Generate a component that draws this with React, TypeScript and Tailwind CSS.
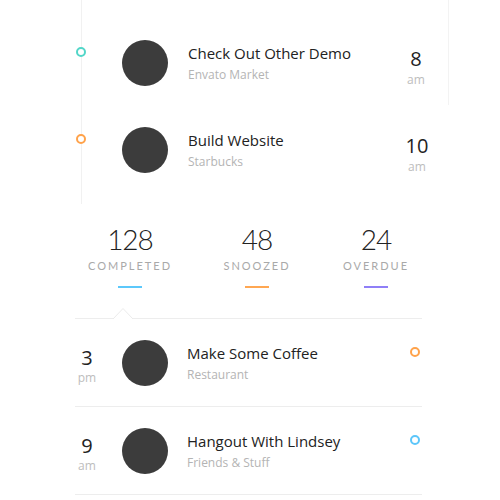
type Task = {
  title: string;
  place: string;
  hour: string;
  period: string;
  dot: string;
};

const upcoming: Task[] = [
  { title: 'Check Out Other Demo', place: 'Envato Market', hour: '8', period: 'am', dot: 'border-[#52d6c8]' },
  { title: 'Build Website', place: 'Starbucks', hour: '10', period: 'am', dot: 'border-[#ffa24a]' },
];

const later: Task[] = [
  { title: 'Make Some Coffee', place: 'Restaurant', hour: '3', period: 'pm', dot: 'border-[#ffa24a]' },
  { title: 'Hangout With Lindsey', place: 'Friends & Stuff', hour: '9', period: 'am', dot: 'border-[#5cc6fa]' },
];

function Avatar() {
  return <div className="w-[46px] h-[46px] rounded-full bg-[#3c3c3c] flex-shrink-0" />;
}

function Dot({ color }: { color: string }) {
  return <div className={`w-[10px] h-[10px] rounded-full border-2 bg-white flex-shrink-0 ${color}`} />;
}

function Info({ task }: { task: Task }) {
  return (
    <div className="min-w-0">
      <p className="text-[15px] leading-[20px] text-[#222] truncate">{task.title}</p>
      <p className="text-[12px] leading-[16px] mt-[4px] text-[#b4b4b4] truncate">{task.place}</p>
    </div>
  );
}

export default function App() {
  return (
    <div className="w-[500px] h-[500px] bg-white overflow-hidden" style={{ fontFamily: '"Open Sans", sans-serif' }}>
      {/* Timeline */}
      <div className="ml-[81px] border-l border-[#f1f1f1] h-[204px]">
        {upcoming.map((task, i) => (
          <div
            key={task.title}
            className={`-ml-[6px] w-[373px] flex items-center ${i === 0 ? 'h-[105px] pt-[20px] border-r border-[#f3f3f3]' : 'h-[89px]'}`}
          >
            <div className="mb-[21px]">
              <Dot color={task.dot} />
            </div>
            <div className="ml-[36px]">
              <Avatar />
            </div>
            <div className="ml-[20px] flex-1">
              <Info task={task} />
            </div>
            <div className="w-[40px] mr-[12px] mt-[9px] text-center">
              <p className="text-[20px] leading-[24px] text-[#222]">{task.hour}</p>
              <p className="mt-[2px] text-[12px] leading-[14px] text-[#bdbdbd]">{task.period}</p>
            </div>
          </div>
        ))}
      </div>

      {/* Stats */}
      <div className="h-[114px] pt-[19px] flex" style={{ fontFamily: 'Lato, sans-serif' }}>
        {[
          { n: '128', label: 'Completed', bar: 'bg-[#5cc8fb]', ml: 'ml-[75px]' },
          { n: '48', label: 'Snoozed', bar: 'bg-[#ffa752]', ml: 'ml-[17px]' },
          { n: '24', label: 'Overdue', bar: 'bg-[#8f7ff7]', ml: 'ml-[9px]' },
        ].map((s) => (
          <div key={s.label} className={`w-[110px] flex flex-col items-center ${s.ml}`}>
            <p className="text-[28px] leading-[32px] font-light tracking-[-1px] text-[#222]">{s.n}</p>
            <p className="mt-[3px] text-[11px] leading-[16px] uppercase tracking-[2px] text-[#a9a9a9]">{s.label}</p>
            <div className={`mt-[12px] w-[24px] h-[2px] ${s.bar}`} />
          </div>
        ))}
      </div>

      {/* List */}
      <div className="relative ml-[75px] w-[347px] border-t border-[#ededed]">
        <svg className="absolute left-[38px] -top-[12px]" width="20" height="13" viewBox="0 0 20 13">
          <polygon points="0,12 10,1.5 20,12 20,13 0,13" fill="white" />
          <polyline points="0,12 10,1.5 20,12" fill="none" stroke="#ebebeb" strokeWidth="1" />
        </svg>
        {later.map((task) => (
          <div key={task.title} className="h-[88px] flex items-center border-b border-[#ededed]">
            <div className="w-[24px] mt-[6px] text-center">
              <p className="text-[20px] leading-[22px] text-[#222]">{task.hour}</p>
              <p className="mt-[2px] text-[12px] leading-[14px] text-[#bdbdbd]">{task.period}</p>
            </div>
            <div className="ml-[23px]">
              <Avatar />
            </div>
            <div className="ml-[19px] flex-1">
              <Info task={task} />
            </div>
            <div className="mr-[2px] mb-[22px]">
              <Dot color={task.dot} />
            </div>
          </div>
        ))}
      </div>
    </div>
  );
}
